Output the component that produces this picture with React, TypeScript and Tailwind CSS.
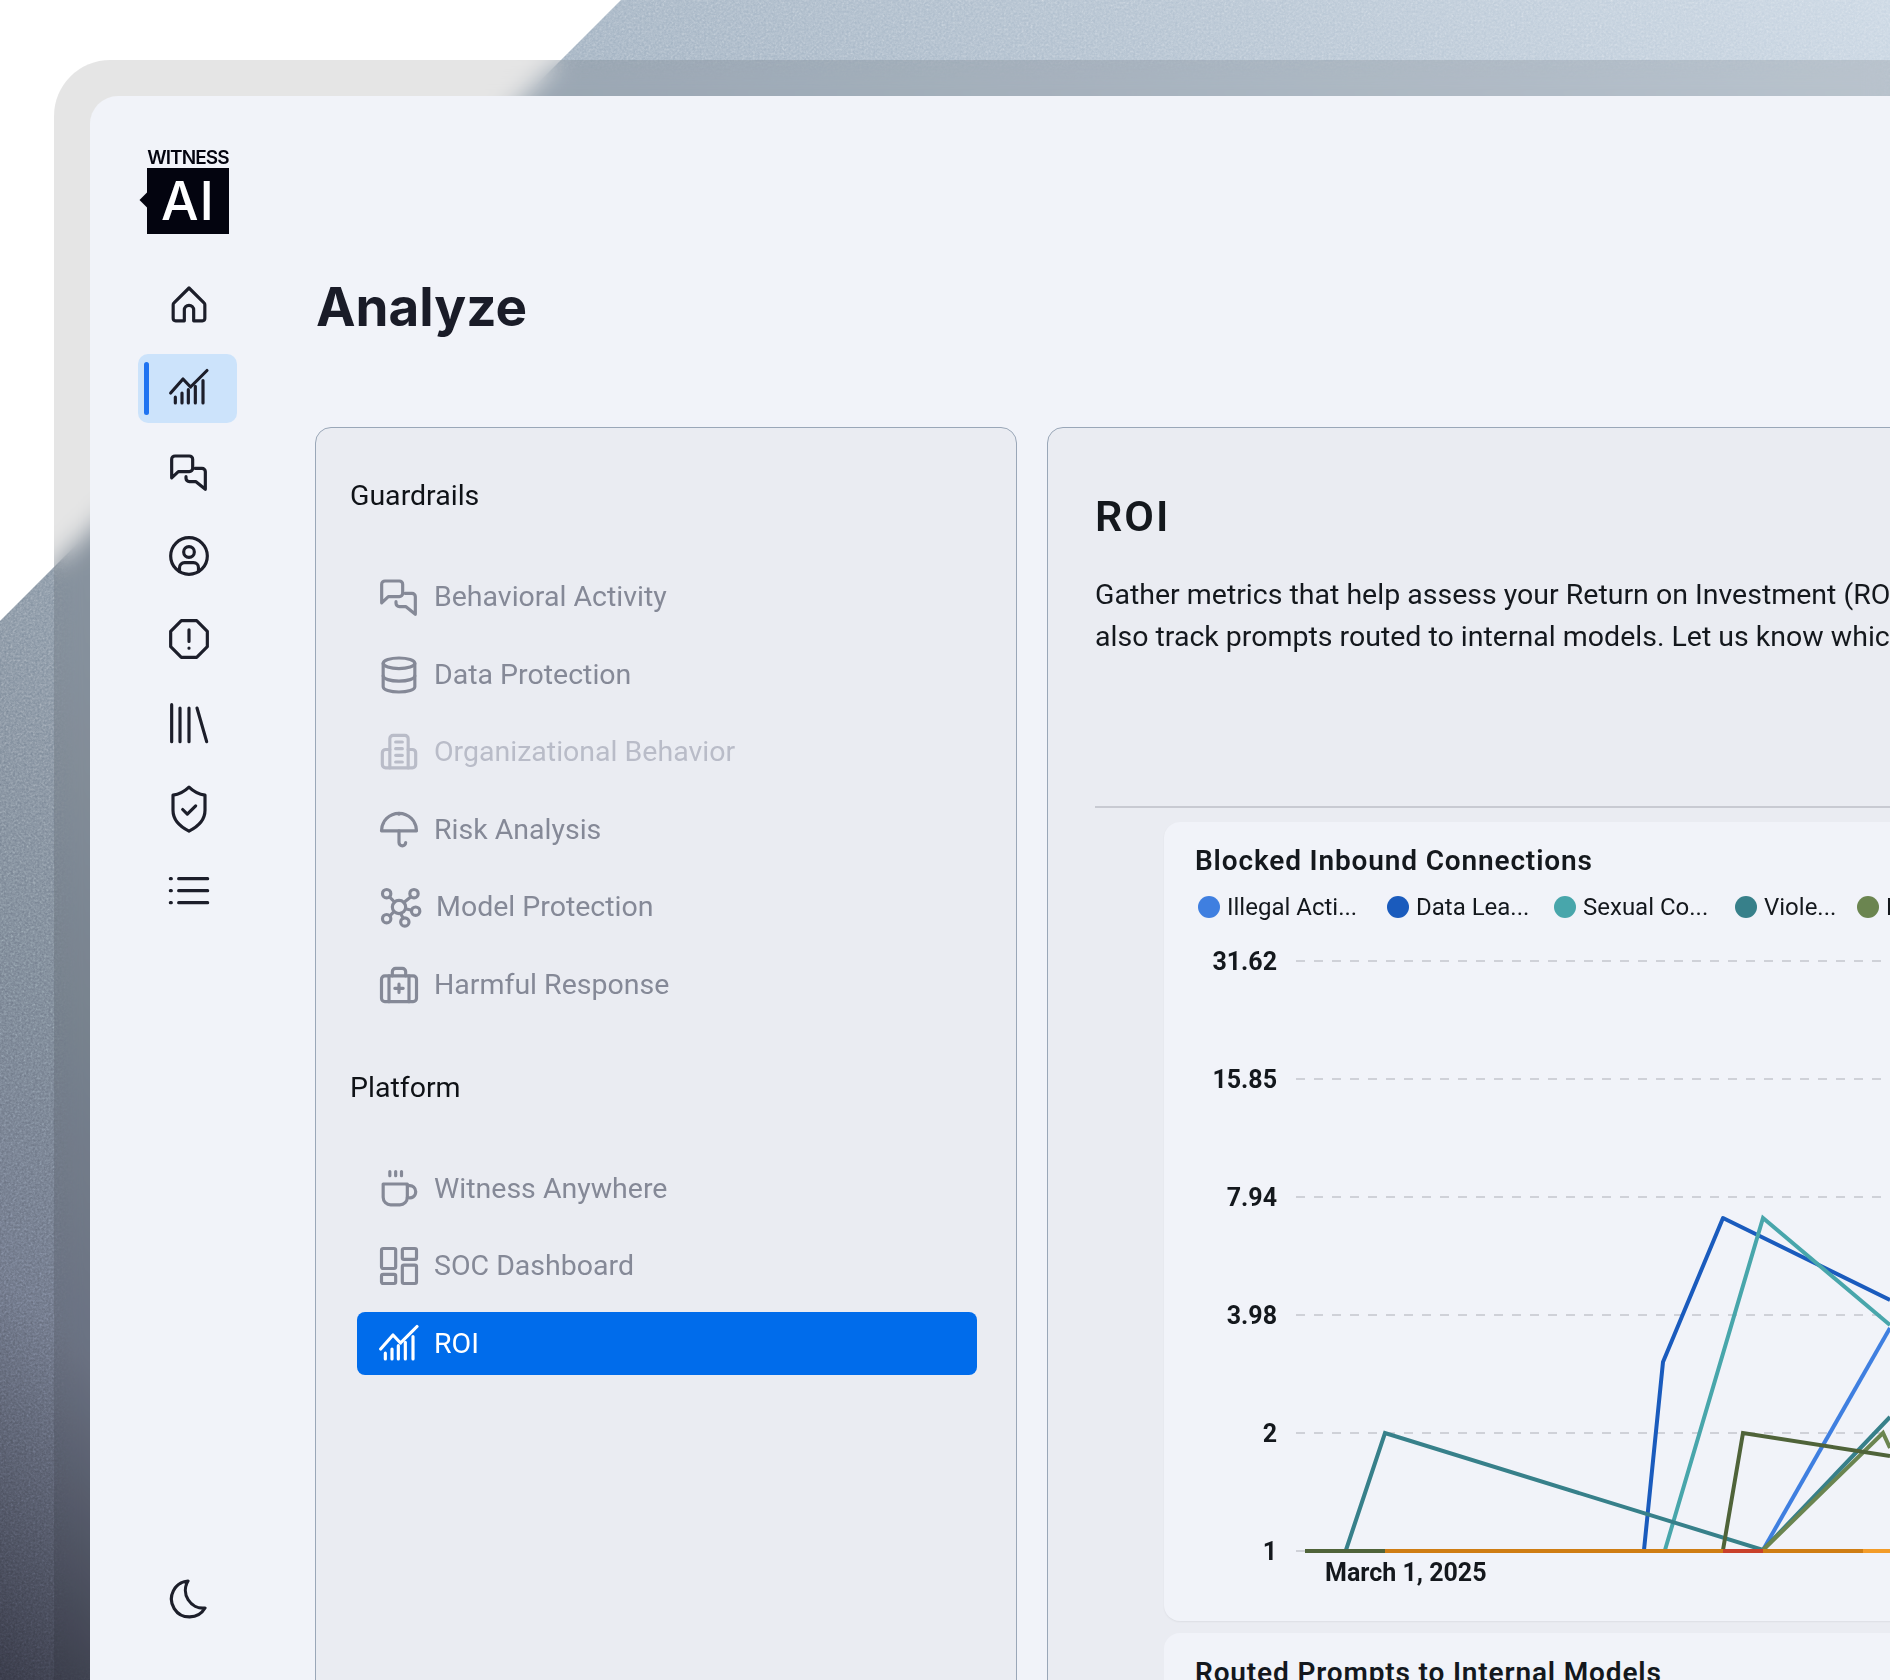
import type { ReactNode } from 'react';

function Icon({ children, className = '' }: { children: ReactNode; className?: string }) {
  return (
    <svg
      viewBox="0 0 24 24"
      fill="none"
      stroke="currentColor"
      strokeWidth="1.9"
      strokeLinecap="round"
      strokeLinejoin="round"
      className={`size-10 shrink-0 overflow-visible ${className}`}
    >
      {children}
    </svg>
  );
}

const HomeIcon = () => (
  <Icon>
    <path d="M12 1.800 3 10.700a1.500 1.500 0 0 0-.5 1.100v8.200a1.500 1.500 0 0 0 1.500 1.500h5.200v-6.500a2.800 2.800 0 0 1 5.600 0v6.500H20a1.500 1.500 0 0 0 1.500-1.500v-8.200a1.500 1.500 0 0 0-.5-1.100Z" />
  </Icon>
);

const ChartIcon = () => (
  <Icon>
    <path d="M1 15 8.400 6.600l4.500 4.800L22.800 1.500" />
    <path d="M3.800 21v-3.500M7.800 21v-6M11.600 21v-8M15.800 21V11M20.400 21V7.500" />
  </Icon>
);

const MessagesIcon = () => (
  <Icon>
    <path d="M1.600 15.500V4.400a2 2 0 0 1 2-2h8.600a2 2 0 0 1 2 2v5.400a2 2 0 0 1-2 2H5.600Z" />
    <path d="M15.600 9.800h4.200a2 2 0 0 1 2 2v10.600l-5.600-4.600h-4a2 2 0 0 1-2-2v-1" />
  </Icon>
);

const UserIcon = () => (
  <Icon>
    <circle cx="12" cy="12" r="11" />
    <circle cx="12" cy="9.600" r="3.200" />
    <path d="M6.300 21v-2a3 3 0 0 1 3-3h5.400a3 3 0 0 1 3 3v2" />
  </Icon>
);

const AlertIcon = () => (
  <Icon>
    <path d="M7.400 1h9.200L23 7.400v9.200L16.600 23H7.400L1 16.600V7.400Z" />
    <path d="M12 6.500v7M12 17.400v.1" />
  </Icon>
);

const LibraryIcon = () => (
  <Icon>
    <path d="M1.600 1v22.200M6.600 3v20.200M12 3v20.200M16.800 3l5.800 20.200" />
  </Icon>
);

const ShieldIcon = () => (
  <Icon>
    <path d="M12 .1c3 2.900 6.500 4.400 9.600 4.800V14c0 6-4.600 10-9.600 12.500C7 24 2.400 20 2.400 14V4.900C5.500 4.500 9 3 12 .1Z" />
    <path d="m8.200 13.500 2.800 2.800 5-5" />
  </Icon>
);

const ListIcon = () => (
  <Icon>
    <path d="M.8 5.200h.6M.8 12.400h.6M.8 19.600h.6M5.800 5.200h17.400M5.800 12.400h17.400M5.800 19.600h17.400" />
  </Icon>
);

const MoonIcon = () => (
  <Icon>
    <path d="M12 1.200A10.800 10.800 0 1 0 22.200 17.400 10.700 10.700 0 0 1 12 1.200Z" />
  </Icon>
);

const DatabaseIcon = () => (
  <Icon>
    <ellipse cx="12" cy="5" rx="9.500" ry="3.200" />
    <path d="M2.500 5v14c0 1.800 4.200 3.200 9.500 3.200s9.500-1.400 9.500-3.200V5" />
    <path d="M2.500 12.500c0 1.800 4.200 3.200 9.500 3.200s9.500-1.400 9.500-3.200" />
  </Icon>
);

const BuildingIcon = () => (
  <Icon>
    <path d="M6.500 21.500V4a2 2 0 0 1 2-2h7a2 2 0 0 1 2 2v17.500" />
    <path d="M6.500 10.500H4a2 2 0 0 0-2 2v7a2 2 0 0 0 2 2h16a2 2 0 0 0 2-2v-7a2 2 0 0 0-2-2h-2.500" />
    <path d="M10 6h4M10 10h4M10 14h4M10 18h4" />
  </Icon>
);

const UmbrellaIcon = () => (
  <Icon>
    <path d="M1.500 12.500a10.500 10.500 0 0 1 21 0Z" />
    <path d="M12 2v.5M12 12.500v7a2 2 0 0 0 4 0" />
  </Icon>
);

const NodesIcon = () => (
  <Icon>
    <circle cx="12" cy="12" r="4" />
    <circle cx="4.600" cy="4" r="2.500" />
    <circle cx="21" cy="4" r="2.500" />
    <circle cx="22" cy="14.500" r="2.500" />
    <circle cx="4.600" cy="19" r="2.500" />
    <circle cx="15.500" cy="21" r="2.500" />
    <path d="M6.300 5.900 9.300 9M19.200 5.800l-4.300 3.500M19.600 14l-3.700-1M6.500 17.300l2.500-2.500M13 15.900l1.500 2.800" />
  </Icon>
);

const BriefcaseIcon = () => (
  <Icon>
    <rect x="1.500" y="6.500" width="21" height="15.500" rx="2" />
    <path d="M8 6.500V4a2 2 0 0 1 2-2h4a2 2 0 0 1 2 2v2.500M6 6.500V22M18 6.500V22M12 11.500v5M9.500 14h5" />
  </Icon>
);

const CoffeeIcon = () => (
  <Icon>
    <path d="M2.500 9H17v8a4.500 4.500 0 0 1-4.500 4.500h-5.500A4.500 4.500 0 0 1 2.500 17Z" />
    <path d="M17 10h1.200a3.500 3.500 0 0 1 3.800 3.500 3.500 3.500 0 0 1-5 3.500" />
    <path d="M6.500 1.500V4M10 1.500V4M13.500 1.500V4" />
  </Icon>
);

const DashboardIcon = () => (
  <Icon>
    <rect x="1.500" y="1.500" width="8.500" height="12" rx="1" />
    <rect x="14" y="1.500" width="8.500" height="6.500" rx="1" />
    <rect x="1.500" y="17" width="8.500" height="5.500" rx="1" />
    <rect x="14" y="11.500" width="8.500" height="11" rx="1" />
  </Icon>
);

function Logo() {
  return (
    <div className="relative flex w-[82px] flex-col items-center font-['Inter',sans-serif]">
      <span className="text-[19px] font-semibold leading-[20px] tracking-[-0.9px] text-[#03040f]">WITNESS</span>
      {/* notch on the left side of the box */}
      <span className="absolute left-[-5px] top-[46px] size-[12px] rotate-45 bg-[#03040f]" />
      <div className="relative flex h-[66px] w-[82px] items-center justify-center bg-[#03040f] text-[53px] font-medium leading-none tracking-[1px] text-white">
        AI
      </div>
    </div>
  );
}

const navIcons = [
  { key: 'home', icon: HomeIcon },
  { key: 'analyze', icon: ChartIcon, active: true },
  { key: 'chat', icon: MessagesIcon },
  { key: 'user', icon: UserIcon },
  { key: 'alert', icon: AlertIcon },
  { key: 'library', icon: LibraryIcon },
  { key: 'shield', icon: ShieldIcon },
  { key: 'list', icon: ListIcon },
];

function Sidebar() {
  return (
    <aside className="flex w-[196px] shrink-0 flex-col items-center pt-[52px] text-[#1c1e2a]">
      <Logo />
      <nav className="ml-[-1px] mt-[36px] flex flex-col gap-[14.700px]">
        {navIcons.map(({ key, icon: NavIcon, active }) => (
          <div
            key={key}
            className={`relative flex h-[69px] w-[99px] items-center justify-center rounded-[10px] pl-[3px] ${active ? 'bg-[#cce3fb]' : ''}`}
          >
            {active && <span className="absolute left-[6px] top-[8px] h-[53px] w-[5px] rounded-full bg-[#1f73f1]" />}
            <NavIcon />
          </div>
        ))}
      </nav>
      <div className="mt-[654px]">
        <MoonIcon />
      </div>
    </aside>
  );
}

type NavItem = { label: string; icon: () => ReactNode; dim?: boolean; active?: boolean; gap?: string };

const guardrails: NavItem[] = [
  { label: 'Behavioral Activity', icon: MessagesIcon },
  { label: 'Data Protection', icon: DatabaseIcon },
  { label: 'Organizational Behavior', icon: BuildingIcon, dim: true },
  { label: 'Risk Analysis', icon: UmbrellaIcon },
  { label: 'Model Protection', icon: NodesIcon, gap: 'gap-[17px]' },
  { label: 'Harmful Response', icon: BriefcaseIcon },
];

const platform: NavItem[] = [
  { label: 'Witness Anywhere', icon: CoffeeIcon },
  { label: 'SOC Dashboard', icon: DashboardIcon },
  { label: 'ROI', icon: ChartIcon, active: true },
];

function MenuItem({ item }: { item: NavItem }) {
  const ItemIcon = item.icon;
  const tone = item.active
    ? 'bg-[#006ceb] text-white'
    : item.dim
      ? 'text-[#b9bcc8]'
      : 'text-[#858997]';
  return (
    <div className={`flex h-[63px] w-[620px] items-center rounded-[8px] pl-[22px] ${item.gap ?? 'gap-[15px]'} ${tone}`}>
      <ItemIcon />
      <span>{item.label}</span>
    </div>
  );
}

function MenuPanel() {
  return (
    <section className="ml-[-1px] h-[1300px] w-[702px] shrink-0 rounded-t-[16px] border border-[#9aa7b8] bg-[#eaecf2] pl-[34px] pt-[50px] text-[28.500px] leading-[36px]">
      <h2 className="text-[#0f1217]">Guardrails</h2>
      <div className="ml-[7px] mt-[51.500px] flex flex-col gap-[14.600px]">
        {guardrails.map((item) => (
          <MenuItem key={item.label} item={item} />
        ))}
      </div>
      <h2 className="mt-[53.500px] text-[#0f1217]">Platform</h2>
      <div className="ml-[7px] mt-[51.500px] flex flex-col gap-[14.300px]">
        {platform.map((item) => (
          <MenuItem key={item.label} item={item} />
        ))}
      </div>
    </section>
  );
}

const legend = [
  { label: 'Illegal Acti...', color: 'bg-[#3f7fe0]', width: 'w-[189px]' },
  { label: 'Data Lea...', color: 'bg-[#1a5bbd]', width: 'w-[167px]' },
  { label: 'Sexual Co...', color: 'bg-[#48a6ab]', width: 'w-[181px]' },
  { label: 'Viole...', color: 'bg-[#37808a]', width: 'w-[122px]' },
  { label: 'Harm...', color: 'bg-[#6b8550]', width: 'w-[120px]' },
];

const ticks = [
  { label: '31.62', y: 961 },
  { label: '15.85', y: 1079 },
  { label: '7.94', y: 1197 },
  { label: '3.98', y: 1315 },
  { label: '2', y: 1433 },
  { label: '1', y: 1551 },
];

// Coordinates are page pixels, the viewBox starts where the svg sits on the page
function InboundChart() {
  return (
    <svg viewBox="1165 950 725 650" className="ml-[1px] mt-[27px] h-[650px] w-[725px] overflow-hidden" fill="none">
      {ticks.map((t) => (
        <g key={t.label}>
          <line x1="1296" x2="1890" y1={t.y} y2={t.y} stroke="#cfd1d8" strokeWidth="2" strokeDasharray="9 9" />
          <text x="1277" y={t.y + 9} textAnchor="end" fill="#14181d" fontSize="25" fontWeight="700">
            {t.label}
          </text>
        </g>
      ))}
      <polyline points="1644,1550 1663,1362 1723,1218 1890,1300" stroke="#1a5bbd" strokeWidth="4" strokeLinejoin="round" />
      <polyline points="1665,1550 1763,1218 1890,1325" stroke="#48a6ab" strokeWidth="4" />
      <polyline points="1763,1550 1890,1328" stroke="#3f7fe0" strokeWidth="4" />
      <polyline points="1346,1550 1385,1433 1763,1550 1890,1417" stroke="#37808a" strokeWidth="4" />
      <polyline points="1763,1550 1883,1433 1890,1448" stroke="#6b8550" strokeWidth="4" />
      <polyline points="1723,1550 1743,1433 1890,1456" stroke="#4f6339" strokeWidth="4" />
      <line x1="1305" x2="1385" y1="1551" y2="1551" stroke="#4f6339" strokeWidth="4" />
      <line x1="1385" x2="1723" y1="1551" y2="1551" stroke="#cf7d14" strokeWidth="4" />
      <line x1="1723" x2="1763" y1="1551" y2="1551" stroke="#c9402a" strokeWidth="4" />
      <line x1="1763" x2="1863" y1="1551" y2="1551" stroke="#cf7d14" strokeWidth="4" />
      <line x1="1863" x2="1890" y1="1551" y2="1551" stroke="#f39c29" strokeWidth="4" />
      <text x="1325" y="1581" fill="#14181d" fontSize="25" fontWeight="700">
        March 1, 2025
      </text>
    </svg>
  );
}

function RoiPanel() {
  return (
    <section className="h-[1300px] w-[1000px] shrink-0 rounded-t-[16px] border border-[#9aa7b8] bg-[#eaecf2] pl-[47px] pt-[62px] text-[#14181d]">
      <h2 className="text-[43px] font-semibold leading-[52px] tracking-[2px]">ROI</h2>
      <p className="mt-[32px] whitespace-nowrap text-[28.500px] leading-[42px]">
        Gather metrics that help assess your Return on Investment (ROI) from AI usage.
        <br />
        also track prompts routed to internal models. Let us know which ones you use.
      </p>
      <div className="mt-[148px] h-[2px] w-[900px] bg-[#c8cad2]" />
      <div className="ml-[69px] mt-[14px] flex flex-col gap-[12px]">
        <div className="h-[799px] w-[900px] rounded-[16px] bg-[#f1f3f9] pt-[21px] shadow-[0_1px_2px_rgba(0,0,0,0.06)]">
          <h3 className="pl-[31px] text-[28px] font-semibold leading-[36px] tracking-[0.85px]">Blocked Inbound Connections</h3>
          <div className="mt-[12px] flex pl-[34px] text-[24px] leading-[32px]">
            {legend.map((l) => (
              <div key={l.label} className={`flex shrink-0 items-center gap-[7px] ${l.width}`}>
                <span className={`size-[22px] shrink-0 rounded-full ${l.color}`} />
                <span>{l.label}</span>
              </div>
            ))}
          </div>
          <InboundChart />
        </div>
        <div className="h-[300px] w-[900px] rounded-[16px] bg-[#f1f3f9] pt-[22px]">
          <h3 className="pl-[31px] text-[28px] font-semibold leading-[36px] tracking-[0.85px]">Routed Prompts to Internal Models</h3>
        </div>
      </div>
    </section>
  );
}

export default function App() {
  return (
    <div className="relative h-[1680px] w-[1890px] overflow-hidden bg-white font-['Roboto',sans-serif]">
      {/* textured backdrop with the cut corner */}
      <div className="absolute inset-0 bg-[linear-gradient(to_bottom_left,#c9d6e3_0%,#a2b2c2_35%,#8391a0_68%,#686f7f_88%,#343643_100%)] [clip-path:polygon(621px_0,100%_0,100%_100%,0_100%,0_621px)]">
        <svg className="absolute inset-0 size-full opacity-60 mix-blend-overlay">
          <filter id="grain">
            <feTurbulence type="fractalNoise" baseFrequency="0.45" numOctaves="2" />
            <feColorMatrix type="saturate" values="0" />
          </filter>
          <rect width="100%" height="100%" filter="url(#grain)" />
        </svg>
      </div>

      <div className="relative ml-[54px] mt-[60px] h-[1620px] w-[1836px] rounded-tl-[56px] bg-black/10 pl-[36px] pt-[36px] backdrop-blur-[12px]">
        <div className="flex h-full overflow-hidden rounded-tl-[28px] bg-[#f1f3f9]">
          <Sidebar />
          <main className="min-w-0 flex-1 pl-[30px] pt-[183px]">
            <h1 className="font-['Inter',sans-serif] text-[53px] font-bold leading-[57px] text-[#1a1c28]">Analyze</h1>
            <div className="mt-[91px] flex gap-[30px]">
              <MenuPanel />
              <RoiPanel />
            </div>
          </main>
        </div>
      </div>
    </div>
  );
}
